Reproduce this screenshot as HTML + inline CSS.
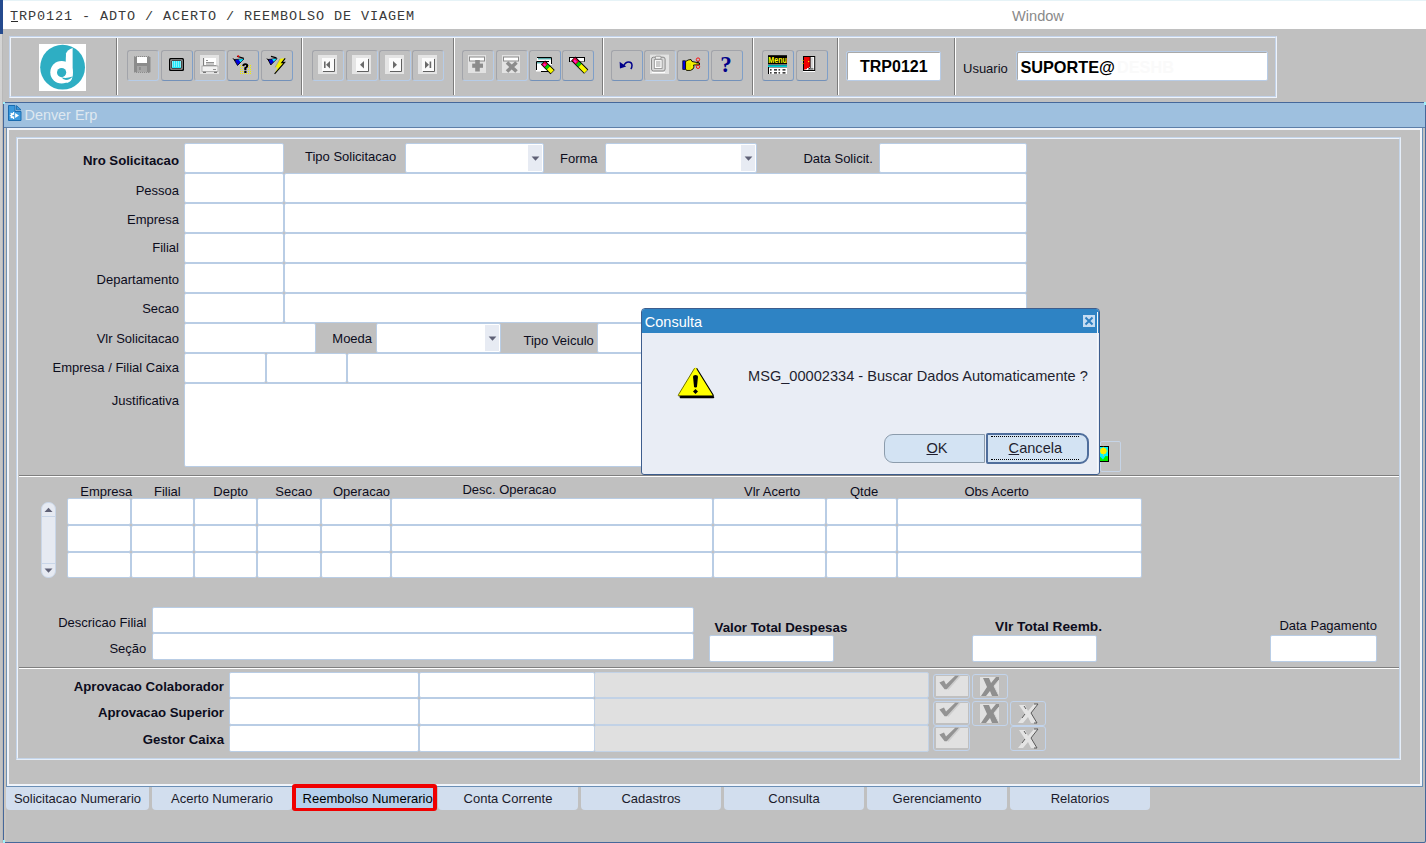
<!DOCTYPE html><html><head><meta charset="utf-8"><style>

html,body{margin:0;padding:0;}
body{width:1426px;height:843px;overflow:hidden;position:relative;background:#c0c0c0;font-family:"Liberation Sans",sans-serif;}
body div, body svg{position:absolute;}
.t{white-space:nowrap;}
.fld{border:1px solid #b9cde5;border-radius:2px;}
.tb{width:30px;height:29px;border:1px solid #a2a4aa;border-bottom-color:#7391b9;border-right-color:#7f9fc8;border-radius:3px;}
.tbd{border-bottom-color:#b6cce8;border-right-color:#b6cce8;}
.tab{height:23px;background:#d2deee;border-radius:0 0 4px 4px;font-size:13px;line-height:23px;text-align:center;color:#1a1a2a;}

</style></head><body>
<div style="left:0px;top:0px;width:1426px;height:29px;background:#fff;"></div>
<div style="left:0px;top:0px;width:1426px;height:1px;background:#e6f3f7;"></div>
<div style="left:0px;top:0px;width:3px;height:34px;background:#244a8e;"></div>
<div style="left:0px;top:34px;width:2px;height:809px;background:linear-gradient(#d4d4d4,#c8c8c8 30%,#c2c2c2 70%);"></div>
<div style="left:2px;top:34px;width:1px;height:809px;background:#b8b8b8;"></div>
<div class="t" style="left:10px;top:9.66px;font-size:13.5px;line-height:13.5px;letter-spacing:0.9px;font-family:'Liberation Mono',monospace;color:#3a3a3a;">TRP0121 - ADTO / ACERTO / REEMBOLSO DE VIAGEM</div>
<div style="left:11px;top:21px;width:7px;height:1px;background:#2a2a2a;"></div>
<div class="t" style="left:1012px;top:8.64px;font-size:14.6px;line-height:14.6px;color:#8a8a8a;">Window</div>
<div style="left:9px;top:36px;width:1268px;height:62px;box-sizing:border-box;border:1px solid #c3d3ea;border-right-color:#eef3fa;border-bottom-color:#eef3fa;"></div>
<div style="left:10px;top:37px;width:1266px;height:60px;box-sizing:border-box;border:1px solid #eef3fa;border-right-color:#c3d3ea;border-bottom-color:#c3d3ea;"></div>
<div style="left:116px;top:38px;width:1px;height:57px;background:#7c7c7c;"></div>
<div style="left:117px;top:38px;width:1px;height:57px;background:#ffffff;"></div>
<div style="left:301px;top:38px;width:1px;height:57px;background:#7c7c7c;"></div>
<div style="left:302px;top:38px;width:1px;height:57px;background:#ffffff;"></div>
<div style="left:453px;top:38px;width:1px;height:57px;background:#7c7c7c;"></div>
<div style="left:454px;top:38px;width:1px;height:57px;background:#ffffff;"></div>
<div style="left:602px;top:38px;width:1px;height:57px;background:#7c7c7c;"></div>
<div style="left:603px;top:38px;width:1px;height:57px;background:#ffffff;"></div>
<div style="left:752px;top:38px;width:1px;height:57px;background:#7c7c7c;"></div>
<div style="left:753px;top:38px;width:1px;height:57px;background:#ffffff;"></div>
<div style="left:837px;top:38px;width:1px;height:57px;background:#7c7c7c;"></div>
<div style="left:838px;top:38px;width:1px;height:57px;background:#ffffff;"></div>
<div style="left:954px;top:38px;width:1px;height:57px;background:#7c7c7c;"></div>
<div style="left:955px;top:38px;width:1px;height:57px;background:#ffffff;"></div>
<svg style="left:39px;top:44px" width="47" height="47" viewBox="0 0 47 47">
<rect width="47" height="47" fill="#fff"/>
<circle cx="23.6" cy="23.2" r="22.4" fill="#2eaec3"/>
<circle cx="22.6" cy="28.3" r="11.3" fill="#fff"/>
<path d="M27 9.5 Q28.5 5.5 33.6 4 L33.6 32 Q33 37.5 28 39 L26 37 Z" fill="#fff"/>
<circle cx="22.6" cy="28.6" r="4.6" fill="#2eaec3"/>
<path d="M22.6 33.2 Q26.5 35 33.6 32.5 Q31 35.8 27 36 Q24 36 22.6 33.2 Z" fill="#2eaec3"/>
</svg>
<div class="tb tbd" style="left:127px;top:50px"></div>
<div class="tb" style="left:161px;top:50px"></div>
<div class="tb tbd" style="left:194px;top:50px"></div>
<div class="tb" style="left:227px;top:50px"></div>
<div class="tb" style="left:261px;top:50px"></div>
<div class="tb tbd" style="left:312px;top:50px"></div>
<div class="tb tbd" style="left:346px;top:50px"></div>
<div class="tb tbd" style="left:379px;top:50px"></div>
<div class="tb tbd" style="left:412px;top:50px"></div>
<div class="tb tbd" style="left:462px;top:50px"></div>
<div class="tb tbd" style="left:496px;top:50px"></div>
<div class="tb" style="left:529px;top:50px"></div>
<div class="tb" style="left:562px;top:50px"></div>
<div class="tb" style="left:611px;top:50px"></div>
<div class="tb tbd" style="left:644px;top:50px"></div>
<div class="tb" style="left:677px;top:50px"></div>
<div class="tb" style="left:711px;top:50px"></div>
<div class="tb" style="left:762px;top:50px"></div>
<div class="tb" style="left:796px;top:50px"></div>
<svg style="left:127px;top:50px" width="31" height="30" viewBox="0 0 31 30"><path d="M7.5 6 H22 L23.5 7.5 V22 L22.5 23 H8 L7 22 V7 Z" fill="#8c8c8c"/><path d="M8 6.5 H22.5 M8 22.5 H22.5" stroke="#c4c4c4" stroke-width="0.8" stroke-dasharray="1 1"/><rect x="10" y="7" width="10" height="6" fill="#fff"/><rect x="10" y="16" width="10" height="6" fill="#a6a6a6"/><rect x="12" y="17" width="1.8" height="3" fill="#8c8c8c"/></svg>
<svg style="left:161px;top:50px" width="31" height="30" viewBox="0 0 31 30"><rect x="8" y="8" width="15" height="13" rx="1.5" fill="#000"/><rect x="9.5" y="9.5" width="12" height="10" fill="#f0f0f0"/><rect x="10.3" y="10.3" width="10.4" height="8.4" fill="#000"/><rect x="11" y="11" width="9" height="7" fill="#22e8f8"/><path d="M11 12h9M11 14h9M11 16h9" stroke="#ffffff" stroke-width="0.9" stroke-dasharray="1 1"/></svg>
<svg style="left:194px;top:50px" width="31" height="30" viewBox="0 0 31 30"><rect x="6" y="5" width="19" height="19" fill="#e2e2e2"/><rect x="10" y="8" width="12" height="7.5" fill="#fff"/><path d="M9.6 8 V15.8 H22.4" stroke="#666" stroke-width="0.9" fill="none"/><path d="M12 10.5h2M12 12.5h8M12 14h8" stroke="#777" stroke-width="0.8"/><rect x="8" y="16" width="16" height="5.5" fill="#f2f2f2" stroke="#9a9a9a" stroke-width="0.7"/><path d="M19 19.5h3" stroke="#888" stroke-width="0.9"/><path d="M9 22.3h3M20 22.3h3" stroke="#777" stroke-width="1.2"/></svg>
<svg style="left:227px;top:50px" width="31" height="30" viewBox="0 0 31 30"><path d="M10 6.3 L16.8 8.4" stroke="#000" stroke-width="1.2"/><circle cx="11.3" cy="6.2" r="1" fill="#e00"/><path d="M7 9.5 L10.5 15.5 L17 9 Z" fill="#0000e0" stroke="#000" stroke-width="0.8"/><path d="M11.5 9.4 L16.6 9.1 L13.6 12.3 Z" fill="#00f0ff"/><path d="M6 8.3 L8.6 11.2" stroke="#000" stroke-width="1"/><rect x="13" y="15" width="1" height="1" fill="#f4f000"/><rect x="13" y="17" width="1" height="1" fill="#f4f000"/><rect x="13" y="19" width="1" height="1" fill="#f4f000"/><rect x="13" y="21" width="1" height="1" fill="#f4f000"/><rect x="13" y="23" width="1" height="1" fill="#f4f000"/><rect x="15" y="15" width="1" height="1" fill="#f4f000"/><rect x="15" y="17" width="1" height="1" fill="#f4f000"/><rect x="15" y="19" width="1" height="1" fill="#f4f000"/><rect x="15" y="21" width="1" height="1" fill="#f4f000"/><rect x="15" y="23" width="1" height="1" fill="#f4f000"/><rect x="17" y="23" width="1" height="1" fill="#f4f000"/><rect x="19" y="23" width="1" height="1" fill="#f4f000"/><rect x="21" y="15" width="1" height="1" fill="#f4f000"/><rect x="21" y="17" width="1" height="1" fill="#f4f000"/><rect x="21" y="19" width="1" height="1" fill="#f4f000"/><rect x="21" y="21" width="1" height="1" fill="#f4f000"/><rect x="21" y="23" width="1" height="1" fill="#f4f000"/><rect x="23" y="15" width="1" height="1" fill="#f4f000"/><rect x="23" y="17" width="1" height="1" fill="#f4f000"/><rect x="23" y="19" width="1" height="1" fill="#f4f000"/><rect x="23" y="21" width="1" height="1" fill="#f4f000"/><rect x="23" y="23" width="1" height="1" fill="#f4f000"/><path d="M15.3 16 Q15.3 13.3 18.3 13.3 Q21.3 13.3 21.3 15.8 Q21.3 17.4 19.4 18.3 L19.4 20.2 L17.3 20.2 L17.3 17.6 Q19.2 16.8 19.2 15.8 Q19.2 15.1 18.3 15.1 Q17.4 15.1 17.4 16.3 Z" fill="#000"/><rect x="17.3" y="21" width="2.2" height="2" fill="#000"/></svg>
<svg style="left:261px;top:50px" width="31" height="30" viewBox="0 0 31 30"><path d="M10 6.3 L15.5 7.8" stroke="#000" stroke-width="1.2"/><path d="M7 9.5 L9.8 15 L16 8.6 Z" fill="#0000e0" stroke="#000" stroke-width="0.8"/><path d="M11 9.3 L15.6 8.8 L12.8 11.8 Z" fill="#00f0ff"/><path d="M6 8.5 L8 11" stroke="#000" stroke-width="1"/><path d="M19 8.8 L24.2 8.3 L20.8 12.6 L23.6 12.4 L13.6 23.8 L16.8 17.2 L14 17.4 Z" fill="#f4f000"/><path d="M24.2 8.3 L20.8 12.6 L23.6 12.4 L13.6 23.8" stroke="#000" stroke-width="1.1" fill="none"/><path d="M19 8.8 L14 17.4" stroke="#888" stroke-width="0.6" fill="none"/></svg>
<svg style="left:318px;top:55px" width="19" height="19" viewBox="0 0 19 19"><rect x="0" y="0" width="19" height="19" fill="#e4e4e4"/><rect x="4" y="3" width="12" height="13" fill="#fbfbfb"/><path d="M5 16.5 H16.5 V4" stroke="#606060" stroke-width="1" fill="none"/><rect x="6" y="6.5" width="1.6" height="6.5" fill="#6a6a6a"/><path d="M12 6 V13.5 L8 9.7 Z" fill="#6a6a6a"/></svg>
<svg style="left:352px;top:55px" width="19" height="19" viewBox="0 0 19 19"><rect x="0" y="0" width="19" height="19" fill="#e4e4e4"/><rect x="4" y="3" width="12" height="13" fill="#fbfbfb"/><path d="M5 16.5 H16.5 V4" stroke="#606060" stroke-width="1" fill="none"/><path d="M12 6 V13.5 L8 9.7 Z" fill="#6a6a6a"/></svg>
<svg style="left:385px;top:55px" width="19" height="19" viewBox="0 0 19 19"><rect x="0" y="0" width="19" height="19" fill="#e4e4e4"/><rect x="4" y="3" width="12" height="13" fill="#fbfbfb"/><path d="M5 16.5 H16.5 V4" stroke="#606060" stroke-width="1" fill="none"/><path d="M8 6 V13.5 L12 9.7 Z" fill="#6a6a6a"/></svg>
<svg style="left:418px;top:55px" width="19" height="19" viewBox="0 0 19 19"><rect x="0" y="0" width="19" height="19" fill="#e4e4e4"/><rect x="4" y="3" width="12" height="13" fill="#fbfbfb"/><path d="M5 16.5 H16.5 V4" stroke="#606060" stroke-width="1" fill="none"/><path d="M7 6 V13.5 L11 9.7 Z" fill="#6a6a6a"/><rect x="11.6" y="6.5" width="1.6" height="6.5" fill="#6a6a6a"/></svg>
<svg style="left:468px;top:55px" width="18" height="18" viewBox="0 0 18 18"><rect x="0" y="0" width="18" height="18" fill="#e2e2e2"/><rect x="1.5" y="2" width="15" height="4" fill="#fff" stroke="#8a8a8a" stroke-width="1"/><rect x="7.2" y="5" width="4.6" height="11.5" fill="#8c8c8c"/><rect x="4.2" y="8.6" width="10.8" height="4.2" fill="#8c8c8c"/></svg>
<svg style="left:502px;top:55px" width="18" height="18" viewBox="0 0 18 18"><rect x="0" y="0" width="18" height="18" fill="#e2e2e2"/><rect x="1.5" y="2" width="15" height="4" fill="#fff" stroke="#8a8a8a" stroke-width="1"/><path d="M5 7.5 L14.5 16.5 M14.5 7.5 L5 16.5" stroke="#8c8c8c" stroke-width="3.6"/></svg>
<svg style="left:529px;top:50px" width="31" height="30" viewBox="0 0 31 30"><rect x="8" y="7" width="15" height="8" fill="#fff"/><path d="M8 7.5 H22.5 V14" stroke="#000" stroke-width="1" fill="none"/><path d="M9 8.8 H22" stroke="#108888" stroke-width="1"/><rect x="7" y="11" width="13" height="10.5" fill="#fff"/><path d="M7.5 20 V11.5 H20" stroke="#000" stroke-width="1" fill="none"/><path d="M12 21.5 H19" stroke="#000" stroke-width="1"/><path d="M8 12.8 H18" stroke="#108888" stroke-width="1"/><path d="M14 12.5 L23.6 22.1" stroke="#000" stroke-width="6"/><path d="M14.4 12.9 L17.2 15.7" stroke="#e8003a" stroke-width="4.2"/><path d="M14.8 14.1 L16.4 15.7" stroke="#ff20d0" stroke-width="2"/><path d="M17.2 15.7 L19.4 17.9" stroke="#00d000" stroke-width="4.2"/><path d="M19.4 17.9 L23.3 21.8" stroke="#f8f800" stroke-width="4.2"/></svg>
<svg style="left:562px;top:50px" width="31" height="30" viewBox="0 0 31 30"><rect x="7.5" y="7.5" width="15" height="4" fill="#fff" stroke="#000" stroke-width="1"/><path d="M8 11.5 H22.5" stroke="#777" stroke-width="1"/><path d="M11.2 8.7 L24.2 21.7" stroke="#000" stroke-width="6"/><path d="M11.6 9.1 L15.4 12.9" stroke="#e8003a" stroke-width="4.2"/><path d="M12 10.3 L14.2 12.5" stroke="#ff20d0" stroke-width="2"/><path d="M15.4 12.9 L18 15.5" stroke="#00d000" stroke-width="4.2"/><path d="M18 15.5 L23.9 21.4" stroke="#f8f800" stroke-width="4.2"/></svg>
<svg style="left:611px;top:50px" width="31" height="30" viewBox="0 0 31 30"><path d="M12.5 16 Q14.5 12 17.5 12 Q21 12 21 15.5 Q21 17.5 19.8 19" stroke="#00008a" stroke-width="1.5" fill="none"/><path d="M8.6 11.8 L9 18.4 L15.2 16.6 Z" fill="#00008a"/></svg>
<svg style="left:644px;top:50px" width="31" height="30" viewBox="0 0 31 30"><rect x="6" y="4.6" width="19" height="19.4" fill="#e2e2e2"/><rect x="7.5" y="7.2" width="13.6" height="13.8" rx="2" fill="#d8d8d8" stroke="#8a8a8a" stroke-width="1"/><rect x="10.3" y="9.7" width="7.8" height="8.7" fill="#fff" stroke="#8a8a8a" stroke-width="0.8"/><path d="M12 12h4.5M12 14h4.5M12 16h4.5" stroke="#8a8a8a" stroke-width="0.9"/><rect x="11.4" y="6.2" width="5.6" height="3" rx="1" fill="#eee" stroke="#8a8a8a" stroke-width="0.8"/><path d="M8 22.5 H21" stroke="#fff" stroke-width="1"/></svg>
<svg style="left:677px;top:50px" width="31" height="30" viewBox="0 0 31 30"><rect x="5.8" y="10.8" width="2.8" height="8.6" fill="#0000e8" stroke="#000" stroke-width="0.7"/><path d="M8.6 11.5 Q11 9.5 14 9.5 L15 11.5 L22.5 13 L22.5 14.8 L16.5 15 L17 17 L16 19 L13.5 20.4 L9.5 20.4 L8.6 19 Z" fill="#f4f000" stroke="#000" stroke-width="0.9"/><path d="M11 12.5 V19 M13 13 V19" stroke="#c8c800" stroke-width="0.6"/><circle cx="21" cy="9.6" r="1.7" fill="none" stroke="#f00" stroke-width="0.9"/><circle cx="21" cy="16.8" r="1.7" fill="none" stroke="#f00" stroke-width="0.9"/><path d="M20 11.2 L22.4 14 M22 11.2 L19.6 14" stroke="#000" stroke-width="0.6"/></svg>
<svg style="left:711px;top:50px" width="31" height="30" viewBox="0 0 31 30"><text x="9.3" y="22" font-family="Liberation Serif" font-weight="bold" font-size="23" fill="#00008a">?</text></svg>
<svg style="left:762px;top:50px" width="31" height="30" viewBox="0 0 31 30"><rect x="6" y="5.2" width="19" height="8.8" fill="#000"/><text x="6.3" y="13" font-family="Liberation Sans" font-weight="bold" font-size="9.5" fill="#ffff00" textLength="18.5" lengthAdjust="spacingAndGlyphs">Menu</text><rect x="6" y="14.6" width="19" height="3" fill="#000"/><rect x="6" y="15.3" width="19" height="1.6" fill="#00e8f0"/><rect x="6" y="17.6" width="19" height="6.4" fill="#fff"/><rect x="6" y="17" width="1" height="7" fill="#000"/><path d="M8 19.8h1.6M12 19.8h3M16.5 19.8h1.6M20.5 19.8h3M8 22.8h1.6M12 22.8h3M16.5 22.8h1.6M20.5 22.8h3" stroke="#000" stroke-width="1.3"/></svg>
<svg style="left:796px;top:50px" width="31" height="30" viewBox="0 0 31 30"><rect x="7" y="6" width="12.2" height="15" fill="#000"/><rect x="8" y="7" width="10.2" height="13" fill="#fff"/><rect x="14.5" y="7.6" width="2.6" height="11.5" fill="#d4d4d4"/><path d="M8 7 H14.2 V17 L13 17 L13 18 L11 18 L11 19 L8 19.8 Z" fill="#f00000"/><path d="M14.2 7 V18.2 L12.5 19 H17.5" stroke="#000" stroke-width="0.8" fill="none"/><rect x="12" y="10.9" width="1.2" height="1.2" fill="#ffe000"/><rect x="6.3" y="10" width="1.2" height="1" fill="#e8d000"/><rect x="6.3" y="13" width="1.2" height="1" fill="#e8d000"/><rect x="7" y="21" width="12" height="1" fill="#fff"/></svg>
<div class="fld" style="left:846px;top:51px;width:93px;height:28px;background:#fff;border-color:#b8cce6;box-shadow:inset 1px 1px 0 #a9a9a9;"></div>
<div class="t" style="left:860px;top:59.25px;font-size:16px;line-height:16px;font-weight:bold;color:#000;">TRP0121</div>
<div class="t" style="left:963px;top:61.99px;font-size:13px;line-height:13px;color:#101020;">Usuario</div>
<div class="fld" style="left:1016px;top:51px;width:250px;height:28px;background:#fff;border-color:#b8cce6;box-shadow:inset 1px 1px 0 #a9a9a9;"></div>
<div class="t" style="left:1020.4px;top:59.00px;font-size:16.3px;line-height:16.3px;font-weight:bold;color:#000;">SUPORTE@</div>
<div class="t" style="left:1117px;top:59.00px;font-size:16.3px;line-height:16.3px;font-weight:bold;color:#fafafa;">DESHB</div>
<div style="left:3px;top:102px;width:1423px;height:741px;box-sizing:border-box;border:1px solid #46689a;border-radius:2px;"></div>
<div style="left:4px;top:103px;width:1421px;height:24px;background:#9ec0df;"></div>
<div style="left:4px;top:127px;width:1421px;height:1px;background:#5c7ea8;"></div>
<div style="left:4px;top:128px;width:2px;height:714px;background:#cac6c1;"></div>
<div style="left:6px;top:128px;width:1417px;height:659px;box-sizing:border-box;border-right:1px solid #6b8fb6;border-bottom:1px solid #6b8fb6;border-left:1px solid #7090b0;"></div>
<div style="left:7px;top:128px;width:1415px;height:658px;box-sizing:border-box;border:2px solid #f0f4fa;border-top-width:2px;border-right-width:2px;border-bottom-width:2px;"></div>
<div style="left:3px;top:102px;width:2px;height:2px;background:#9ef0fa;"></div>
<div style="left:1424px;top:102px;width:2px;height:3px;background:#9ef0fa;"></div>
<div style="left:3px;top:840px;width:2px;height:3px;background:#9ef0fa;"></div>
<svg style="left:8px;top:105px" width="14" height="17" viewBox="0 0 14 17">
<path d="M0.5 0.5 H7 V6.5 H13 V15.5 H0.5 Z" fill="#3a98dc" stroke="#1a6cb0" stroke-width="1"/>
<path d="M8.5 0.6 L13 4.8 H8.5 Z" fill="#3a98dc" stroke="#1a6cb0" stroke-width="0.9"/>
<path d="M6.2 7 L5.2 7 L4.8 8 L3.8 8.3 L3 7.6 L2.4 8.3 L2.9 9.2 L2.6 10 L1.8 10.3 V11 L2.6 11.2 L2.9 12 L2.4 12.8 L3 13.4 L3.8 12.9 L4.8 13.2 L5.2 14.1 L6.2 14.1 Z" fill="#fff"/>
<circle cx="5.2" cy="10.6" r="0.9" fill="#3a98dc"/>
<path d="M7.1 8 L11 10.5 L7.1 13.1 Z" fill="#fff"/>
</svg>
<div class="t" style="left:24.5px;top:108.31px;font-size:14.4px;line-height:14.4px;color:#dfe8f0;">Denver Erp</div>
<div style="left:16px;top:137px;width:1385px;height:623px;box-sizing:border-box;border-left:1px solid #c4d5ea;border-top:1px solid #c4d5ea;border-right:1px solid #e6eef8;border-bottom:1px solid #e6eef8;"></div>
<div style="left:17px;top:138px;width:1383px;height:621px;box-sizing:border-box;border-left:1px solid #eef3fa;border-top:1px solid #eef3fa;border-right:1px solid #c4d5ea;border-bottom:1px solid #c4d5ea;"></div>
<div class="fld" style="left:184px;top:143px;width:98px;height:28px;background:#fff;border-color:#b9cde5"></div>
<div class="fld" style="left:405px;top:143px;width:137px;height:28px;background:#fff;border-color:#b9cde5"></div>
<div style="left:528px;top:145px;width:14px;height:26px;background:#e7ebf3;"></div>
<svg style="left:531.0px;top:155.5px" width="9" height="6"><path d="M0.6 0.5 L8.4 0.5 L4.5 4.8 Z" fill="#5f6176"/></svg>
<div class="fld" style="left:605px;top:143px;width:150px;height:28px;background:#fff;border-color:#b9cde5"></div>
<div style="left:741px;top:145px;width:14px;height:26px;background:#e7ebf3;"></div>
<svg style="left:744.0px;top:155.5px" width="9" height="6"><path d="M0.6 0.5 L8.4 0.5 L4.5 4.8 Z" fill="#5f6176"/></svg>
<div class="fld" style="left:879px;top:143px;width:146px;height:28px;background:#fff;border-color:#b9cde5"></div>
<div class="fld" style="left:184px;top:173px;width:98px;height:28px;background:#fff;border-color:#b9cde5"></div>
<div class="fld" style="left:284px;top:173px;width:741px;height:28px;background:#fff;border-color:#b9cde5"></div>
<div class="fld" style="left:184px;top:203px;width:98px;height:28px;background:#fff;border-color:#b9cde5"></div>
<div class="fld" style="left:284px;top:203px;width:741px;height:28px;background:#fff;border-color:#b9cde5"></div>
<div class="fld" style="left:184px;top:233px;width:98px;height:28px;background:#fff;border-color:#b9cde5"></div>
<div class="fld" style="left:284px;top:233px;width:741px;height:28px;background:#fff;border-color:#b9cde5"></div>
<div class="fld" style="left:184px;top:263px;width:98px;height:28px;background:#fff;border-color:#b9cde5"></div>
<div class="fld" style="left:284px;top:263px;width:741px;height:28px;background:#fff;border-color:#b9cde5"></div>
<div class="fld" style="left:184px;top:293px;width:98px;height:28px;background:#fff;border-color:#b9cde5"></div>
<div class="fld" style="left:284px;top:293px;width:741px;height:28px;background:#fff;border-color:#b9cde5"></div>
<div class="fld" style="left:184px;top:323px;width:130px;height:28px;background:#fff;border-color:#b9cde5"></div>
<div class="fld" style="left:376px;top:323px;width:123px;height:28px;background:#fff;border-color:#b9cde5"></div>
<div style="left:485px;top:325px;width:14px;height:26px;background:#e7ebf3;"></div>
<svg style="left:488.0px;top:335.5px" width="9" height="6"><path d="M0.6 0.5 L8.4 0.5 L4.5 4.8 Z" fill="#5f6176"/></svg>
<div class="fld" style="left:597px;top:323px;width:199px;height:28px;background:#fff;border-color:#b9cde5"></div>
<div class="fld" style="left:184px;top:353px;width:80px;height:28px;background:#fff;border-color:#b9cde5"></div>
<div class="fld" style="left:266px;top:353px;width:79px;height:28px;background:#fff;border-color:#b9cde5"></div>
<div class="fld" style="left:347px;top:353px;width:678px;height:28px;background:#fff;border-color:#b9cde5"></div>
<div class="fld" style="left:184px;top:383px;width:841px;height:82px;background:#fff;border-color:#b9cde5"></div>
<div class="t" style="right:1247px;top:154.12px;font-size:13.2px;line-height:13.2px;font-weight:bold;color:#0c0c1c;">Nro Solicitacao</div>
<div class="t" style="right:1247px;top:183.99px;font-size:13px;line-height:13px;color:#0c0c1c;">Pessoa</div>
<div class="t" style="right:1247px;top:213.49px;font-size:13px;line-height:13px;color:#0c0c1c;">Empresa</div>
<div class="t" style="right:1247px;top:241.49px;font-size:13px;line-height:13px;color:#0c0c1c;">Filial</div>
<div class="t" style="right:1247px;top:273.49px;font-size:13px;line-height:13px;color:#0c0c1c;">Departamento</div>
<div class="t" style="right:1247px;top:301.99px;font-size:13px;line-height:13px;color:#0c0c1c;">Secao</div>
<div class="t" style="right:1247px;top:331.99px;font-size:13px;line-height:13px;color:#0c0c1c;">Vlr Solicitacao</div>
<div class="t" style="right:1247px;top:361.49px;font-size:13px;line-height:13px;color:#0c0c1c;">Empresa / Filial Caixa</div>
<div class="t" style="right:1247px;top:393.59px;font-size:13px;line-height:13px;color:#0c0c1c;">Justificativa</div>
<div class="t" style="left:305px;top:150.19px;font-size:13px;line-height:13px;color:#0c0c1c;">Tipo Solicitacao</div>
<div class="t" style="left:560px;top:151.59px;font-size:13px;line-height:13px;color:#0c0c1c;">Forma</div>
<div class="t" style="left:803.4px;top:151.59px;font-size:13px;line-height:13px;color:#0c0c1c;">Data Solicit.</div>
<div class="t" style="left:332.3px;top:331.79px;font-size:13px;line-height:13px;color:#0c0c1c;">Moeda</div>
<div class="t" style="left:523.5px;top:333.79px;font-size:13px;line-height:13px;color:#0c0c1c;">Tipo Veiculo</div>
<div style="left:1100px;top:441px;width:21px;height:31px;box-sizing:border-box;border:1px solid #c6d4e6;border-radius:2px;"></div>
<svg style="left:1096px;top:446px" width="13" height="16" viewBox="0 0 13 16">
<rect x="0.5" y="0.5" width="12" height="15" fill="#00f0ff" stroke="#000" stroke-width="1"/>
<path d="M1 10.5 L3.5 10 L7 13.5 L9.5 10 L12 10.3 V15 H1 Z" fill="#00ee00"/>
<circle cx="7.4" cy="5" r="3.2" fill="#ffee00"/>
<path d="M7.4 0.8 V1.8 M7.4 8.6 V9.6 M3.2 5 H4.2 M10.6 5 H11.6" stroke="#ffee00" stroke-width="1"/>
</svg>
<div style="left:19px;top:475px;width:1380px;height:1px;background:#7f7f7f;"></div>
<div style="left:19px;top:476px;width:1380px;height:1px;background:#ffffff;"></div>
<div class="fld" style="left:67px;top:498px;width:62px;height:25px;background:#fff;border-color:#b9cde5"></div>
<div class="fld" style="left:131px;top:498px;width:61px;height:25px;background:#fff;border-color:#b9cde5"></div>
<div class="fld" style="left:194px;top:498px;width:61px;height:25px;background:#fff;border-color:#b9cde5"></div>
<div class="fld" style="left:257px;top:498px;width:62px;height:25px;background:#fff;border-color:#b9cde5"></div>
<div class="fld" style="left:321px;top:498px;width:68px;height:25px;background:#fff;border-color:#b9cde5"></div>
<div class="fld" style="left:391px;top:498px;width:320px;height:25px;background:#fff;border-color:#b9cde5"></div>
<div class="fld" style="left:713px;top:498px;width:111px;height:25px;background:#fff;border-color:#b9cde5"></div>
<div class="fld" style="left:826px;top:498px;width:69px;height:25px;background:#fff;border-color:#b9cde5"></div>
<div class="fld" style="left:897px;top:498px;width:243px;height:25px;background:#fff;border-color:#b9cde5"></div>
<div class="fld" style="left:67px;top:525px;width:62px;height:25px;background:#fff;border-color:#b9cde5"></div>
<div class="fld" style="left:131px;top:525px;width:61px;height:25px;background:#fff;border-color:#b9cde5"></div>
<div class="fld" style="left:194px;top:525px;width:61px;height:25px;background:#fff;border-color:#b9cde5"></div>
<div class="fld" style="left:257px;top:525px;width:62px;height:25px;background:#fff;border-color:#b9cde5"></div>
<div class="fld" style="left:321px;top:525px;width:68px;height:25px;background:#fff;border-color:#b9cde5"></div>
<div class="fld" style="left:391px;top:525px;width:320px;height:25px;background:#fff;border-color:#b9cde5"></div>
<div class="fld" style="left:713px;top:525px;width:111px;height:25px;background:#fff;border-color:#b9cde5"></div>
<div class="fld" style="left:826px;top:525px;width:69px;height:25px;background:#fff;border-color:#b9cde5"></div>
<div class="fld" style="left:897px;top:525px;width:243px;height:25px;background:#fff;border-color:#b9cde5"></div>
<div class="fld" style="left:67px;top:552px;width:62px;height:24px;background:#fff;border-color:#b9cde5"></div>
<div class="fld" style="left:131px;top:552px;width:61px;height:24px;background:#fff;border-color:#b9cde5"></div>
<div class="fld" style="left:194px;top:552px;width:61px;height:24px;background:#fff;border-color:#b9cde5"></div>
<div class="fld" style="left:257px;top:552px;width:62px;height:24px;background:#fff;border-color:#b9cde5"></div>
<div class="fld" style="left:321px;top:552px;width:68px;height:24px;background:#fff;border-color:#b9cde5"></div>
<div class="fld" style="left:391px;top:552px;width:320px;height:24px;background:#fff;border-color:#b9cde5"></div>
<div class="fld" style="left:713px;top:552px;width:111px;height:24px;background:#fff;border-color:#b9cde5"></div>
<div class="fld" style="left:826px;top:552px;width:69px;height:24px;background:#fff;border-color:#b9cde5"></div>
<div class="fld" style="left:897px;top:552px;width:243px;height:24px;background:#fff;border-color:#b9cde5"></div>
<div class="t" style="left:80.3px;top:484.59px;font-size:13px;line-height:13px;color:#0c0c1c;">Empresa</div>
<div class="t" style="left:154px;top:484.59px;font-size:13px;line-height:13px;color:#0c0c1c;">Filial</div>
<div class="t" style="left:213.3px;top:484.59px;font-size:13px;line-height:13px;color:#0c0c1c;">Depto</div>
<div class="t" style="left:275.3px;top:484.59px;font-size:13px;line-height:13px;color:#0c0c1c;">Secao</div>
<div class="t" style="left:333px;top:484.59px;font-size:13px;line-height:13px;color:#0c0c1c;">Operacao</div>
<div class="t" style="left:462.4px;top:483.49px;font-size:13px;line-height:13px;color:#0c0c1c;">Desc. Operacao</div>
<div class="t" style="left:744px;top:484.59px;font-size:13px;line-height:13px;color:#0c0c1c;">Vlr Acerto</div>
<div class="t" style="left:850px;top:484.59px;font-size:13px;line-height:13px;color:#0c0c1c;">Qtde</div>
<div class="t" style="left:964.5px;top:484.59px;font-size:13px;line-height:13px;color:#0c0c1c;">Obs Acerto</div>
<div style="left:41px;top:502px;width:15px;height:76px;box-sizing:border-box;background:#e6eaf2;border:1px solid #c9d6e8;border-radius:7px;"></div>
<div style="left:42px;top:516px;width:13px;height:1px;background:#c9d6e8;"></div>
<div style="left:42px;top:563px;width:13px;height:1px;background:#c9d6e8;"></div>
<svg style="left:44px;top:507px" width="9" height="6"><path d="M0.5 5 L8.5 5 L4.5 0.8 Z" fill="#5f6176"/></svg>
<svg style="left:44px;top:568px" width="9" height="6"><path d="M0.5 0.5 L8.5 0.5 L4.5 4.7 Z" fill="#5f6176"/></svg>
<div class="fld" style="left:152px;top:607px;width:540px;height:24px;background:#fff;border-color:#b9cde5"></div>
<div class="fld" style="left:152px;top:633px;width:540px;height:25px;background:#fff;border-color:#b9cde5"></div>
<div class="t" style="right:1279.7px;top:615.99px;font-size:13px;line-height:13px;color:#0c0c1c;">Descricao Filial</div>
<div class="t" style="right:1279.7px;top:642.19px;font-size:13px;line-height:13px;color:#0c0c1c;">Seção</div>
<div class="t" style="left:714.5px;top:620.74px;font-size:13.3px;line-height:13.3px;font-weight:bold;color:#0c0c1c;">Valor Total Despesas</div>
<div class="fld" style="left:709px;top:635px;width:123px;height:25px;background:#fff;border-color:#b9cde5"></div>
<div class="t" style="left:995px;top:620.00px;font-size:13.7px;line-height:13.7px;font-weight:bold;color:#0c0c1c;">Vlr Total Reemb.</div>
<div class="fld" style="left:972px;top:635px;width:123px;height:25px;background:#fff;border-color:#b9cde5"></div>
<div class="t" style="left:1279.4px;top:618.69px;font-size:13px;line-height:13px;color:#0c0c1c;">Data Pagamento</div>
<div class="fld" style="left:1270px;top:635px;width:105px;height:25px;background:#fff;border-color:#b9cde5"></div>
<div style="left:19px;top:667px;width:1380px;height:1px;background:#7f7f7f;"></div>
<div style="left:19px;top:668px;width:1380px;height:1px;background:#ffffff;"></div>
<div class="fld" style="left:229px;top:672px;width:188px;height:24px;background:#fff;border-color:#b9cde5"></div>
<div class="fld" style="left:419px;top:672px;width:174px;height:24px;background:#fff;border-color:#b9cde5"></div>
<div class="fld" style="left:594px;top:672px;width:333px;height:24px;background:#e0e0e0;border-color:#c2d2e6"></div>
<div class="fld" style="left:229px;top:698px;width:188px;height:25px;background:#fff;border-color:#b9cde5"></div>
<div class="fld" style="left:419px;top:698px;width:174px;height:25px;background:#fff;border-color:#b9cde5"></div>
<div class="fld" style="left:594px;top:698px;width:333px;height:25px;background:#e0e0e0;border-color:#c2d2e6"></div>
<div class="fld" style="left:229px;top:725px;width:188px;height:25px;background:#fff;border-color:#b9cde5"></div>
<div class="fld" style="left:419px;top:725px;width:174px;height:25px;background:#fff;border-color:#b9cde5"></div>
<div class="fld" style="left:594px;top:725px;width:333px;height:25px;background:#e0e0e0;border-color:#c2d2e6"></div>
<div class="t" style="right:1202px;top:680.32px;font-size:13.2px;line-height:13.2px;font-weight:bold;color:#0c0c1c;">Aprovacao Colaborador</div>
<div class="t" style="right:1202px;top:706.22px;font-size:13.2px;line-height:13.2px;font-weight:bold;color:#0c0c1c;">Aprovacao Superior</div>
<div class="t" style="right:1202px;top:733.32px;font-size:13.2px;line-height:13.2px;font-weight:bold;color:#0c0c1c;">Gestor Caixa</div>
<div style="left:933px;top:674px;width:37px;height:25px;box-sizing:border-box;border:1px solid #c2d4ec;border-radius:3px;"></div>
<div style="left:936px;top:676px;width:32px;height:20px;background:#e1e1e1;"></div>
<svg style="left:933px;top:674px" width="37" height="25" viewBox="0 0 37 25"><path d="M26.8 2 L14.8 15.4" stroke="#cecece" stroke-width="1.6" fill="none"/><path d="M6.4 8.6 L11 6.6 L13 10.4 L22.2 1.8 L26 1.8 L13.8 15.2 L11.6 15.2 Z" fill="#939393"/></svg>
<div style="left:972px;top:674px;width:36px;height:25px;box-sizing:border-box;border:1px solid #c2d4ec;border-radius:3px;"></div>
<div style="left:980px;top:677px;width:19px;height:19px;background:#e1e1e1;"></div>
<svg style="left:972px;top:674px" width="36" height="25" viewBox="0 0 36 25"><path d="M11 4 L17 4 L19 9 L24 3 L27 3 L27 6 L22 12 L27 22 L20 22 L18 17 L14 22 L9 22 L15 13 Z" fill="#8f8f8f"/><path d="M27 6 L22 12 L27 22" stroke="#d8d8d8" stroke-width="1" fill="none"/></svg>
<div style="left:933px;top:701px;width:37px;height:25px;box-sizing:border-box;border:1px solid #c2d4ec;border-radius:3px;"></div>
<div style="left:936px;top:703px;width:32px;height:20px;background:#e1e1e1;"></div>
<svg style="left:933px;top:701px" width="37" height="25" viewBox="0 0 37 25"><path d="M26.8 2 L14.8 15.4" stroke="#cecece" stroke-width="1.6" fill="none"/><path d="M6.4 8.6 L11 6.6 L13 10.4 L22.2 1.8 L26 1.8 L13.8 15.2 L11.6 15.2 Z" fill="#939393"/></svg>
<div style="left:972px;top:701px;width:36px;height:25px;box-sizing:border-box;border:1px solid #c2d4ec;border-radius:3px;"></div>
<div style="left:980px;top:704px;width:19px;height:19px;background:#e1e1e1;"></div>
<svg style="left:972px;top:701px" width="36" height="25" viewBox="0 0 36 25"><path d="M11 4 L17 4 L19 9 L24 3 L27 3 L27 6 L22 12 L27 22 L20 22 L18 17 L14 22 L9 22 L15 13 Z" fill="#8f8f8f"/><path d="M27 6 L22 12 L27 22" stroke="#d8d8d8" stroke-width="1" fill="none"/></svg>
<div style="left:1010px;top:701px;width:36px;height:25px;box-sizing:border-box;border:1px solid #c2d4ec;border-radius:3px;"></div>
<svg style="left:1010px;top:701px" width="36" height="25" viewBox="0 0 36 25"><path d="M9 4 L15 4 L18 10 L24 3 L28 3 L21 12 L27 22 L21 22 L18 16 L13 22 L8 22 L15 13 Z" fill="#e4e4e4"/><path d="M24 3 L28 3 L21 12 L27 22 L24 22 M15 13 L12 17 M14 5 L16 8" stroke="#5a5a5a" stroke-width="1" fill="none"/></svg>
<div style="left:933px;top:726px;width:37px;height:25px;box-sizing:border-box;border:1px solid #c2d4ec;border-radius:3px;"></div>
<div style="left:936px;top:728px;width:32px;height:20px;background:#e1e1e1;"></div>
<svg style="left:933px;top:726px" width="37" height="25" viewBox="0 0 37 25"><path d="M26.8 2 L14.8 15.4" stroke="#cecece" stroke-width="1.6" fill="none"/><path d="M6.4 8.6 L11 6.6 L13 10.4 L22.2 1.8 L26 1.8 L13.8 15.2 L11.6 15.2 Z" fill="#939393"/></svg>
<div style="left:1010px;top:726px;width:36px;height:25px;box-sizing:border-box;border:1px solid #c2d4ec;border-radius:3px;"></div>
<svg style="left:1010px;top:726px" width="36" height="25" viewBox="0 0 36 25"><path d="M9 4 L15 4 L18 10 L24 3 L28 3 L21 12 L27 22 L21 22 L18 16 L13 22 L8 22 L15 13 Z" fill="#e4e4e4"/><path d="M24 3 L28 3 L21 12 L27 22 L24 22 M15 13 L12 17 M14 5 L16 8" stroke="#5a5a5a" stroke-width="1" fill="none"/></svg>
<div class="tab" style="left:6px;top:787px;width:143px;">Solicitacao Numerario</div>
<div class="tab" style="left:152px;top:787px;width:140px;">Acerto Numerario</div>
<div class="tab" style="left:438px;top:787px;width:140px;">Conta Corrente</div>
<div class="tab" style="left:581px;top:787px;width:140px;">Cadastros</div>
<div class="tab" style="left:724px;top:787px;width:140px;">Consulta</div>
<div class="tab" style="left:867px;top:787px;width:140px;">Gerenciamento</div>
<div class="tab" style="left:1010px;top:787px;width:140px;">Relatorios</div>
<div style="left:292px;top:784px;width:145px;height:27px;box-sizing:border-box;border:4px solid #f00000;border-bottom-width:3.5px;border-radius:3px;background:#b5d0ec;"></div>
<div class="t" style="left:302.6px;top:791.69px;font-size:13px;line-height:13px;color:#000;">Reembolso Numerario</div>
<div style="left:641px;top:308px;width:459px;height:167px;box-sizing:border-box;background:#e9edf5;border:1px solid #3d5d8d;border-radius:4px 4px 3px 3px;"></div>
<div style="left:642px;top:309px;width:457px;height:24px;background:#2e83c4;border-radius:3px 3px 0 0;"></div>
<div style="left:1097px;top:312px;width:1px;height:160px;background:#f6f8fc;"></div>
<div class="t" style="left:644.8px;top:314.72px;font-size:14.5px;line-height:14.5px;color:#fff;">Consulta</div>
<svg style="left:1083px;top:315px" width="12" height="12" viewBox="0 0 12 12">
<rect width="12" height="12" fill="#c5dcf2"/>
<path d="M2.5 2.5 L9.5 9.5 M9.5 2.5 L2.5 9.5" stroke="#2e7fc0" stroke-width="2"/>
</svg>
<svg style="left:677px;top:366px" width="40" height="34" viewBox="0 0 40 34">
<path d="M19.6 3 L37.2 31 Q37.6 32.3 36.2 32.3 L3.5 32.3 Q2.2 32.3 2.8 31 Z" fill="#000"/>
<path d="M17.6 2.2 Q18.6 0.8 19.6 2.2 L36 28.8 Q36.6 30 35.4 30 L2 30 Q0.8 30 1.4 28.8 Z" fill="#ffff00"/>
<path d="M17.6 2.2 L1.4 28.8 Q0.8 30 2 30" stroke="#707000" stroke-width="1" fill="none"/>
<path d="M19.6 2.2 L36 28.8 Q36.6 30 35.4 30 L2 30" stroke="#000" stroke-width="1.1" fill="none"/>
<path d="M16 10.5 Q16 9 18.5 9 Q21 9 21 10.5 L20 20.5 L19.3 21.5 L17.7 21.5 L17 20.5 Z" fill="#000"/>
<path d="M18.5 23 L21 25.5 L18.5 28 L16 25.5 Z" fill="#000"/>
</svg>
<div class="t" style="left:748px;top:368.64px;font-size:14.6px;line-height:14.6px;color:#1f1f2f;">MSG_00002334 - Buscar Dados Automaticamente ?</div>
<div style="left:884px;top:434px;width:101px;height:29px;box-sizing:border-box;background:#d3e3f3;border:1px solid #8c9cac;border-radius:9px 0 0 9px;"></div>
<div style="left:986px;top:433px;width:103px;height:31px;box-sizing:border-box;background:#d3e3f3;border:2px solid #4f6e9c;border-radius:2px 9px 9px 2px;"></div>
<div style="left:991px;top:436px;width:88px;height:24px;box-sizing:border-box;border:1px dotted #000;border-left:none;border-right:none;"></div>
<div class="t" style="left:926.5px;top:441.34px;font-size:14.6px;line-height:14.6px;color:#1f1f2f;"><u>O</u>K</div>
<div class="t" style="left:1008.6px;top:441.34px;font-size:14.6px;line-height:14.6px;color:#1f1f2f;"><u>C</u>ancela</div>
</body></html>
